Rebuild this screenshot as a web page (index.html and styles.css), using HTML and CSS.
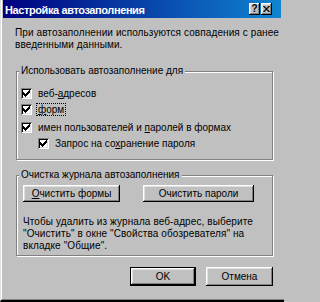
FILE: index.html
```html
<!DOCTYPE html>
<html lang="ru">
<head>
<meta charset="utf-8">
<link rel="stylesheet" href="styles.css">
</head>
<body>
<div class="window">
  <div class="frame">
    <div class="titlebar">
      <span class="title">Настройка автозаполнения</span>
      <div class="tbtns">
        <span class="tbtn raised help">?</span>
        <span class="tbtn raised close"><svg class="xicon" width="7" height="6" viewBox="0 0 8 7"><path d="M0 0h2v1h1v1h2v-1h1v-1h2v1h-1v1h-1v1h-1v1h1v1h1v1h1v1h-2v-1h-1v-1h-2v1h-1v1h-2v-1h1v-1h1v-1h1v-1h-1v-1h-1v-1h-1z" fill="#000"/></svg></span>
      </div>
    </div>
    <div class="content">
      <p class="intro">При автозаполнении используются совпадения с ранее<br>введенными данными.</p>
      <div class="group g1">
        <div class="legend">Использовать автозаполнение для</div>
        <div class="row r1"><span class="cb"><svg width="7" height="7" viewBox="0 0 7 7"><path d="M7 0H6V1H5V2H4V3H3V4H2V3H1V2H0V5H1V6H2V7H3V6H4V5H5V4H6V3H7V0Z" fill="#000"/></svg></span><span class="lbl">веб-<u>а</u>дресов</span></div>
        <div class="row r2"><span class="cb"><svg width="7" height="7" viewBox="0 0 7 7"><path d="M7 0H6V1H5V2H4V3H3V4H2V3H1V2H0V5H1V6H2V7H3V6H4V5H5V4H6V3H7V0Z" fill="#000"/></svg></span><span class="lbl focus"><u>ф</u>орм</span></div>
        <div class="row r3"><span class="cb"><svg width="7" height="7" viewBox="0 0 7 7"><path d="M7 0H6V1H5V2H4V3H3V4H2V3H1V2H0V5H1V6H2V7H3V6H4V5H5V4H6V3H7V0Z" fill="#000"/></svg></span><span class="lbl">имен пользователей и <u>п</u>аролей в формах</span></div>
        <div class="row r4"><span class="cb"><svg width="7" height="7" viewBox="0 0 7 7"><path d="M7 0H6V1H5V2H4V3H3V4H2V3H1V2H0V5H1V6H2V7H3V6H4V5H5V4H6V3H7V0Z" fill="#000"/></svg></span><span class="lbl">Запрос на со<u>х</u>ранение пароля</span></div>
      </div>
      <div class="group g2">
        <div class="legend">Очистка журнала автозаполнения</div>
        <div class="clearbtns">
          <button class="btn raised b1"><u>О</u>чистить формы</button>
          <button class="btn raised b2">Очистить пароли</button>
        </div>
        <p class="note">Чтобы удалить из журнала веб-адрес, выберите<br>"Очистить" в окне "Свойства обозревателя" на<br>вкладке "Общие".</p>
      </div>
      <div class="footer">
        <button class="btn default b-ok">OK</button>
        <button class="btn raised b-cancel">Отмена</button>
      </div>
    </div>
  </div>
</div>
</body>
</html>
```
FILE: styles.css
```css
html, body {
  margin: 0;
  padding: 0;
  background: #c0c0c0;
}
body {
  font-family: "Liberation Sans", Arial, sans-serif;
  font-size: 10px;
  color: #000;
}
.window {
  box-sizing: border-box;
  width: 284px;
  height: 302px;
  background: #c0c0c0;
  border-left: 1px solid #dfdfdf;
  border-bottom: 2px solid #000;
}
.frame {
  box-sizing: border-box;
  height: 300px;
  border-left: 1px solid #fff;
  border-bottom: 1px solid #808080;
  padding-left: 1px;
}
.titlebar {
  box-sizing: border-box;
  height: 18px;
  margin-right: 3px;
  padding: 0 9px 0 2px;
  background: linear-gradient(to right, #000080, #1084d0);
  display: flex;
  align-items: center;
  justify-content: space-between;
}
.title {
  color: #fff;
  font-weight: bold;
  font-size: 11px;
  letter-spacing: -0.4px;
  line-height: 18px;
  padding-top: 1px;
}
.tbtns {
  display: flex;
  gap: 1px;
}
.raised {
  background: #c0c0c0;
  box-shadow: inset -1px -1px #000, inset 1px 1px #fff, inset -2px -2px #808080, inset 2px 2px #dfdfdf;
}
.tbtn {
  width: 11px;
  height: 12px;
  display: flex;
  align-items: center;
  justify-content: center;
  font-weight: bold;
  font-size: 10px;
  line-height: 10px;
}
.xicon {
  display: block;
}
.content {
  padding-left: 12px;
}
.intro {
  margin: 9px 0 0;
  line-height: 12px;
  letter-spacing: 0.1px;
}
.group {
  box-sizing: border-box;
  width: 257px;
  margin-left: 1px;
  border: 1px solid #808080;
  box-shadow: inset 1px 1px #fff, 1px 1px #fff;
}
.g1 {
  margin-top: 20px;
  height: 89px;
}
.g2 {
  margin-top: 15px;
  height: 81px;
}
.legend {
  width: fit-content;
  margin: -7px 0 0 2px;
  padding: 0 2px;
  line-height: 12px;
  background: #c0c0c0;
}
.row {
  display: flex;
  align-items: center;
  height: 15px;
  padding-left: 4px;
}
.r1 { margin-top: 9px; }
.r2 { margin-top: 1px; }
.r3 { margin-top: 3px; }
.r4 { margin-top: 1px; padding-left: 21px; }
.cb {
  width: 11px;
  height: 11px;
  flex: none;
  background: #fff;
  box-shadow: inset 1px 1px #808080, inset -1px -1px #fff, inset 2px 2px #000, inset -2px -2px #dfdfdf;
  display: flex;
  align-items: center;
  justify-content: center;
  margin-right: 4px;
}
.cb svg {
  display: block;
}
.lbl {
  padding: 0 1px;
  border: 1px dotted transparent;
  line-height: 11px;
}
.lbl.focus {
  border-color: #000;
}
u {
  text-decoration: underline;
  text-underline-offset: 1px;
}
.btn {
  font: inherit;
  color: #000;
  margin: 0;
  padding: 0;
  border: 0;
  background: #c0c0c0;
  box-sizing: border-box;
}
.clearbtns {
  display: flex;
  gap: 23px;
  margin: 4px 0 0 6px;
}
.b1 { width: 97px; height: 17px; }
.b2 { width: 111px; height: 17px; }
.note {
  margin: 14px 0 0 6px;
  line-height: 12px;
  letter-spacing: 0.1px;
}
.footer {
  width: 257px;
  margin: 11px 0 0 1px;
  display: flex;
  justify-content: flex-end;
  gap: 10px;
}
.b-ok {
  width: 66px;
  height: 19px;
  border: 1px solid #000;
  box-shadow: inset -1px -1px #000, inset 1px 1px #fff, inset -2px -2px #808080, inset 2px 2px #dfdfdf;
}
.b-cancel {
  width: 67px;
  height: 19px;
}
```
